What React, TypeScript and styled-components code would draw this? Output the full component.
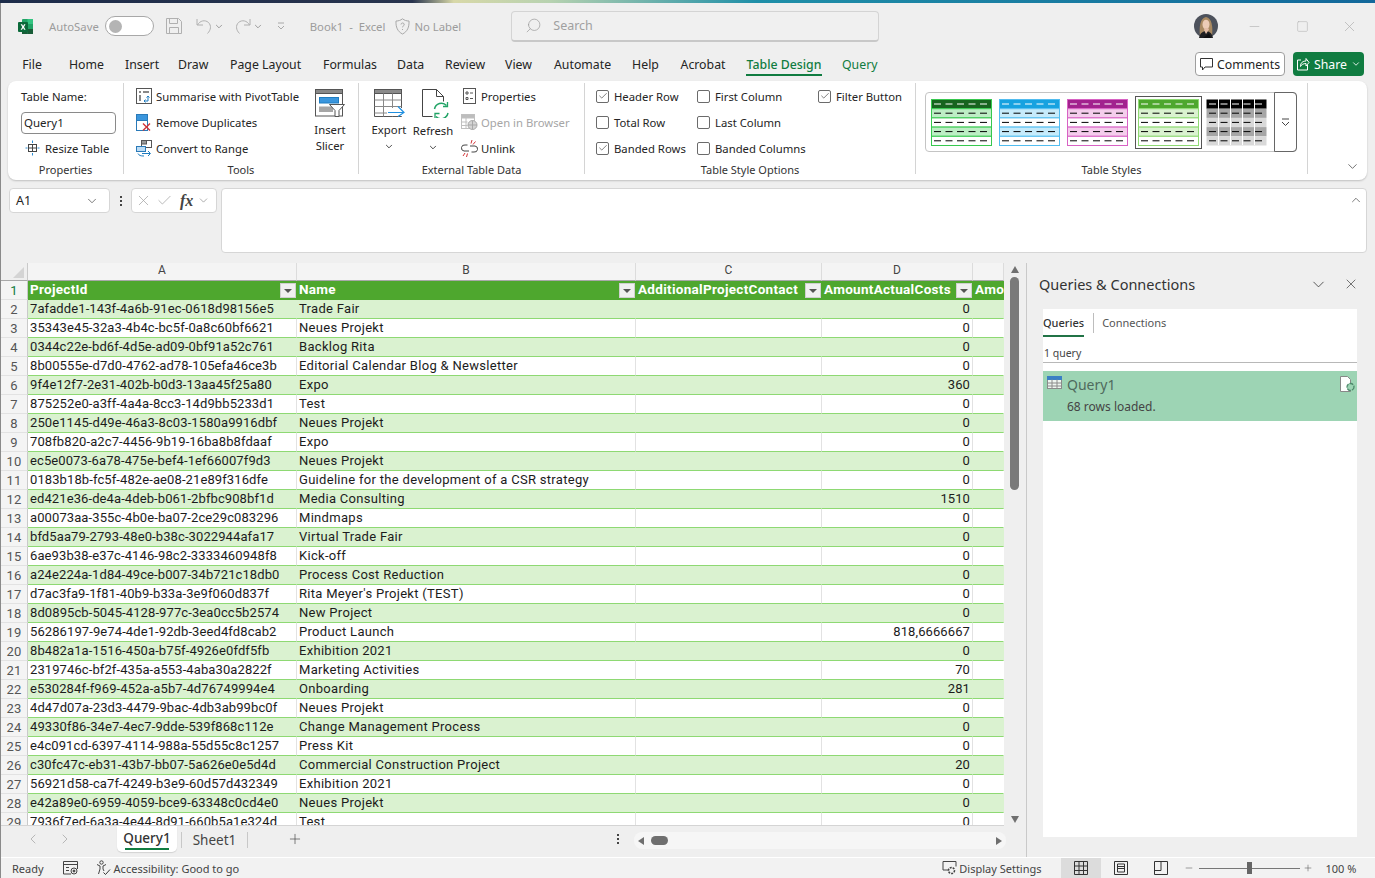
import React from "react";
import styled, { createGlobalStyle } from "styled-components";
import { ChevronDown, ChevronLeft, ChevronRight, Minus, Plus, Search, Square, X, Check } from "lucide-react";

const Global = createGlobalStyle`
  html, body { margin: 0; padding: 0; background: #efefef; }
  * { box-sizing: border-box; }
  body { font-family: "Noto Sans", "Liberation Sans", sans-serif; color: #242424; }
`;

const rows: [string, string, string][] = [
  ["7afadde1-143f-4a6b-91ec-0618d98156e5", "Trade Fair", "0"],
  ["35343e45-32a3-4b4c-bc5f-0a8c60bf6621", "Neues Projekt", "0"],
  ["0344c22e-bd6f-4d5e-ad09-0bf91a52c761", "Backlog Rita", "0"],
  ["8b00555e-d7d0-4762-ad78-105efa46ce3b", "Editorial Calendar Blog & Newsletter", "0"],
  ["9f4e12f7-2e31-402b-b0d3-13aa45f25a80", "Expo", "360"],
  ["875252e0-a3ff-4a4a-8cc3-14d9bb5233d1", "Test", "0"],
  ["250e1145-d49e-46a3-8c03-1580a9916dbf", "Neues Projekt", "0"],
  ["708fb820-a2c7-4456-9b19-16ba8b8fdaaf", "Expo", "0"],
  ["ec5e0073-6a78-475e-bef4-1ef66007f9d3", "Neues Projekt", "0"],
  ["0183b18b-fc5f-482e-ae08-21e89f316dfe", "Guideline for the development of a CSR strategy", "0"],
  ["ed421e36-de4a-4deb-b061-2bfbc908bf1d", "Media Consulting", "1510"],
  ["a00073aa-355c-4b0e-ba07-2ce29c083296", "Mindmaps", "0"],
  ["bfd5aa79-2793-48e0-b38c-3022944afa17", "Virtual Trade Fair", "0"],
  ["6ae93b38-e37c-4146-98c2-3333460948f8", "Kick-off", "0"],
  ["a24e224a-1d84-49ce-b007-34b721c18db0", "Process Cost Reduction", "0"],
  ["d7ac3fa9-1f81-40b9-b33a-3e9f060d837f", "Rita Meyer's Projekt (TEST)", "0"],
  ["8d0895cb-5045-4128-977c-3ea0cc5b2574", "New Project", "0"],
  ["56286197-9e74-4de1-92db-3eed4fd8cab2", "Product Launch", "818,6666667"],
  ["8b482a1a-1516-450a-b75f-4926e0fdf5fb", "Exhibition 2021", "0"],
  ["2319746c-bf2f-435a-a553-4aba30a2822f", "Marketing Activities", "70"],
  ["e530284f-f969-452a-a5b7-4d76749994e4", "Onboarding", "281"],
  ["4d47d07a-23d3-4479-9bac-4db3ab99bc0f", "Neues Projekt", "0"],
  ["49330f86-34e7-4ec7-9dde-539f868c112e", "Change Management Process", "0"],
  ["e4c091cd-6397-4114-988a-55d55c8c1257", "Press Kit", "0"],
  ["c30fc47c-eb31-43b7-bb07-5a626e0e5d4d", "Commercial Construction Project", "20"],
  ["56921d58-ca7f-4249-b3e9-60d57d432349", "Exhibition 2021", "0"],
  ["e42a89e0-6959-4059-bce9-63348c0cd4e0", "Neues Projekt", "0"],
  ["7936f7ed-6a3a-4e44-8d91-660b5a1e324d", "Test", "0"],
];

const Page = styled.div`
  width: 1375px; height: 878px; overflow: hidden; display: flex; flex-direction: column; background: #efefef;
`;
const Wallpaper = styled.div`
  height: 3px; flex: none;
  background: linear-gradient(90deg, #1d2c4a 0, #28344e 30%, #d8d8a8 33%, #b7d2b0 40%, #1f8fa8 55%, #12689b 100%);
`;
const Frame = styled.div`
  flex: 1; min-height: 0; display: flex; flex-direction: column; border-left: 1px solid #8a8a8a;
`;

/* Title bar */
const TitleBar = styled.div`
  height: 46px; flex: none; display: flex; align-items: center; padding-left: 16px; color: #9c9c9c; font-size: 11.3px;
`;
const At = styled.span<{ $ml?: number }>`
  display: inline-flex; align-items: center; margin-left: ${p => p.$ml ?? 0}px; flex: none;
`;
const Toggle = styled.span`
  width: 49px; height: 20px; border: 1px solid #a8a8a8; border-radius: 10px; background: #fff; margin-left: 6px;
  display: flex; align-items: center; padding-left: 3px; flex: none;
  &::before { content: ""; width: 13px; height: 13px; border-radius: 50%; background: #b4b4b4; }
`;
const SearchBox = styled.div`
  width: 368px; height: 31px; margin-left: 50px; background: #f0f0f0; border: 1px solid #d4d4d4; border-bottom: 2px solid #c8c8c8;
  border-radius: 4px; display: flex; align-items: center; padding-left: 13px; gap: 11px; font-size: 12.5px; color: #a0a0a0; flex: none;
`;
const WinButtons = styled.div`
  display: flex; align-items: center; margin-left: 29px; gap: 32px; color: #b0b0b0;
`;

/* Tabs */
const TabBar = styled.div`
  height: 29px; flex: none; padding: 3px 11px 0 21px; display: flex; align-items: flex-start; font-size: 12.3px;
`;
const Tab = styled.div<{ $active?: boolean; $ctx?: boolean; $w?: number }>`
  height: 24px; line-height: 25px; width: ${p => p.$w}px; white-space: nowrap; text-align: center;
  color: ${p => (p.$active || p.$ctx ? "#107c41" : "#242424")};
  border-bottom: 2px solid ${p => (p.$active ? "#107c41" : "transparent")};
  font-weight: ${p => (p.$active ? 500 : 400)};
`;
const TabGap = styled.div<{ $w: number }>`
  width: ${p => p.$w}px; flex: none;
`;
const CommentsBtn = styled.div`
  margin-left: auto; width: 90px; height: 24px; border: 1px solid #9e9e9e; border-radius: 4px; background: #fff;
  display: flex; align-items: center; justify-content: center; gap: 4px; font-size: 12.3px;
`;
const ShareBtn = styled.div`
  margin-left: 8px; width: 71px; height: 24px; border-radius: 4px; background: #107c41; color: #fff;
  display: flex; align-items: center; justify-content: center; gap: 4px; font-size: 12.3px;
`;

/* Ribbon */
const Ribbon = styled.div`
  height: 99px; flex: none; margin: 3px 8px 0 7px; padding-top: 2px; background: #fff; border-radius: 8px;
  box-shadow: 0 1px 2px rgba(0,0,0,.2); display: flex; font-size: 11.3px;
`;
const Group = styled.div<{ $w: number; $last?: boolean }>`
  width: ${p => p.$w}px; height: 91px; flex: none; display: flex; flex-direction: column;
  border-right: ${p => (p.$last ? "none" : "1px solid #d4d4d4")};
`;
const GroupBody = styled.div<{ $pl?: number }>`
  height: 79px; flex: none; display: flex; padding-left: ${p => p.$pl ?? 0}px;
`;
const GroupLabel = styled.div`
  height: 16px; line-height: 16px; flex: none; text-align: center; font-size: 11px; color: #333;
`;
const Stack = styled.div<{ $w?: number }>`
  display: flex; flex-direction: column; ${p => (p.$w ? `width: ${p.$w}px; flex: none;` : "")}
`;
const Row = styled.div<{ $off?: boolean; $pl?: number; $gap?: number }>`
  height: 26px; display: flex; align-items: center; gap: ${p => p.$gap ?? 4}px; white-space: nowrap; padding-left: ${p => p.$pl ?? 0}px;
  color: ${p => (p.$off ? "#a6a6a6" : "#242424")};
`;
const NameInput = styled.div`
  width: 95px; height: 22px; border: 1px solid #8a8a8a; border-radius: 4px; font-size: 11.5px; padding-left: 2px; line-height: 20px; margin-top: 3px;
`;
const ResizeRow = styled(Row)`
  margin-top: 1px;
`;
const LargeBtn = styled.div<{ $w: number; $ml?: number }>`
  width: ${p => p.$w}px; flex: none; margin-left: ${p => p.$ml ?? 0}px; display: flex; flex-direction: column; align-items: center;
  padding-top: 6px; line-height: 16px; text-align: center; color: #242424;
`;
const LargeText = styled.div`
  margin-top: 5px; white-space: nowrap;
`;
const LargeChevron = styled.div`
  margin-top: 6px;
`;
const Box = styled.span`
  width: 13px; height: 13px; border: 1px solid #6b6b6b; border-radius: 2px; display: inline-flex; align-items: center; justify-content: center;
  margin-right: 1px; flex: none; color: #333; background: #fff;
`;
const Gallery = styled.div`
  margin: 9px 0 0 9px; width: 372px; height: 60px; border: 1px solid #c4c4c4; border-radius: 4px; display: flex; align-items: center; padding-left: 5px;
`;
const ThumbSlot = styled.div<{ $sel?: boolean; $ml?: number }>`
  width: ${p => (p.$sel ? 67 : 68)}px; height: 53px; display: flex; align-items: center; flex: none;
  margin-left: ${p => p.$ml ?? 0}px;
  padding-left: ${p => (p.$sel ? 2 : 0)}px;
  border: ${p => (p.$sel ? "1px solid #555" : "none")};
`;
const GalleryMore = styled.div`
  margin-left: auto; width: 24px; height: 60px; margin-right: -1px; border: 1px solid #666; border-radius: 0 4px 4px 0; display: flex; align-items: center; justify-content: center;
`;
const RibbonEnd = styled.div`
  flex: 1; display: flex; align-items: flex-end; justify-content: flex-end; padding: 0 7px 6px 0; color: #444;
`;

/* Formula bar */
const FormulaBar = styled.div`
  height: 65px; flex: none; margin-top: 8px; padding-left: 8px; padding-right: 8px; display: flex; align-items: flex-start;
`;
const NameBox = styled.div`
  width: 101px; height: 25px; background: #fff; border: 1px solid #d6d6d6; border-radius: 4px; display: flex; align-items: center;
  justify-content: space-between; padding: 0 10px 0 6px; font-size: 12.5px;
`;
const Dots = styled.div`
  width: 21px; height: 25px; display: flex; flex-direction: column; align-items: center; justify-content: center; gap: 2px;
  & > i { width: 2px; height: 2px; background: #444; display: block; }
`;
const FxBox = styled.div`
  width: 86px; height: 25px; background: #fff; border: 1px solid #d6d6d6; border-radius: 4px; display: flex; align-items: center;
  padding-left: 3px; gap: 4px; color: #a8a8a8; flex: none;
`;
const Fx = styled.span`
  font-family: "Liberation Serif", serif; font-style: italic; font-weight: 700; font-size: 16px; color: #444; margin-left: 3px;
`;
const FormulaInput = styled.div`
  flex: 1; height: 65px; margin-left: 4px; background: #fff; border: 1px solid #d6d6d6; border-radius: 4px; display: flex; justify-content: flex-end; padding: 4px 3px 0 0; color: #444;
`;

/* Workspace */
const Workspace = styled.div`
  height: 594px; flex: none; margin-top: 10px; display: flex;
`;
const SheetColumn = styled.div`
  width: 1025px; flex: none; display: flex; flex-direction: column;
`;
const SheetMain = styled.div`
  height: 563px; flex: none; display: flex;
`;
const Sheet = styled.div`
  width: 1003px; height: 563px; flex: none; overflow: hidden; background: #fff;
  display: grid; grid-template-columns: 27px 269px 339px 186px 151px 31px; grid-auto-rows: 19px; grid-template-rows: 18px;
  font-family: Roboto, "Liberation Sans", sans-serif; font-size: 13px; letter-spacing: .1px; border-bottom: 1px solid #d4d4d4;
`;
const Corner = styled.div`
  background: #efefef; border-right: 1px solid #c9c9c9; border-bottom: 1px solid #a8a8a8; display: flex; align-items: flex-end; justify-content: flex-end; padding: 0 3px 2px 0;
  &::after { content: ""; border-style: solid; border-width: 0 0 11px 11px; border-color: transparent transparent #d4d4d4 transparent; }
`;
const ColHead = styled.div`
  background: #f4f4f4; border-right: 1px solid #dcdcdc; border-bottom: 1px solid #a8a8a8; text-align: center; line-height: 15px; font-size: 12px; color: #444;
`;
const RowHead = styled.div<{ $sel?: boolean }>`
  background: #f4f4f4; border-right: 1px solid #c9c9c9; border-bottom: 1px solid #e2e2e2; text-align: center; line-height: 19px; font-size: 13px; color: ${p => (p.$sel ? "#107c41" : "#555")};
`;
const HeaderCell = styled.div`
  background: #4ea72e; color: #fff; font-weight: 700; display: flex; align-items: center; justify-content: space-between; padding: 0 1px 0 2px; white-space: nowrap; overflow: hidden; font-size: 13.5px; letter-spacing: .3px;
  line-height: 17px;
`;
const HeaderText = styled.span`
  margin-bottom: 2px;
`;
const FilterBtn = styled.span`
  width: 16px; height: 15px; background: #f0f0f0; border: 1px solid #d0d0d0; display: flex; align-items: center; justify-content: center; flex: none;
  &::after { content: ""; border-style: solid; border-width: 4px 4px 0 4px; border-color: #555 transparent transparent transparent; }
`;
const Cell = styled.div<{ $band: boolean; $num?: boolean; $noLine?: boolean }>`
  background: ${p => (p.$band ? "#daf2d0" : "#fff")};
  border-bottom: 1px solid #8ed973;
  border-right: 1px solid ${p => (p.$band || p.$noLine ? "transparent" : "#e2e2e2")};
  padding: 0 ${p => (p.$num ? "2px" : "0")} 0 ${p => (p.$num ? "0" : "2px")};
  text-align: ${p => (p.$num ? "right" : "left")};
  line-height: 18px; white-space: nowrap; overflow: hidden; color: #1c1c1c;
`;
const NameCell = styled(Cell)`
  letter-spacing: .3px;
`;
const VScroll = styled.div`
  width: 22px; flex: none; display: flex; flex-direction: column; align-items: center; padding: 3px 1px 0 0; color: #666;
`;
const VThumb = styled.div`
  width: 9px; height: 213px; border-radius: 5px; background: #7a7a7a; margin-top: 4px;
`;
const VSpacer = styled.div`
  flex: 1;
`;
const TriUp = styled.div`
  border-style: solid; border-width: 0 4.5px 7px 4.5px; border-color: transparent transparent #707070 transparent; flex: none;
`;
const TriDown = styled.div`
  border-style: solid; border-width: 7px 4.5px 0 4.5px; border-color: #707070 transparent transparent transparent; flex: none; margin-bottom: 3px;
`;
const SheetTabs = styled.div`
  height: 31px; flex: none; display: flex; align-items: flex-start; font-size: 13.5px; color: #444;
`;
const NavArrows = styled.div`
  width: 116px; height: 26px; flex: none; display: flex; align-items: center; padding-left: 24px; gap: 16px; color: #a8a8a8;
`;
const ActiveTab = styled.div`
  width: 60px; height: 26px; background: #fff; border-radius: 0 0 5px 5px; text-align: center; flex: none; font-weight: 500; color: #333; padding-top: 2px; line-height: 20px;
  box-shadow: 0 1px 1px rgba(0,0,0,.12);
  &::after { content: ""; display: block; width: 44px; height: 2px; background: #107c41; margin: 0 auto; }
`;
const PlainTab = styled.div`
  width: 67px; height: 16px; margin: 6px 0 0 4px; border-left: 1px solid #c8c8c8; border-right: 1px solid #c8c8c8; text-align: center; line-height: 16px; flex: none;
`;
const AddTab = styled.div`
  width: 40px; height: 26px; margin-left: 37px; display: flex; align-items: center; color: #444; flex: none; padding-left: 2px;
`;
const TabDots = styled(Dots)`
  width: 16px; height: 26px; margin-left: 285px; flex: none;
`;
const HScroll = styled.div`
  width: 372px; height: 17px; margin: 6px 0 0 8px; background: #f6f6f6; border-radius: 8px; display: flex; align-items: center; padding: 0 4px; flex: none;
`;
const HThumb = styled.div`
  width: 17px; height: 9px; border-radius: 5px; background: #6f6f6f; margin-left: 7px;
`;
const TriLeft = styled.div`
  border-style: solid; border-width: 4.5px 6px 4.5px 0; border-color: transparent #6f6f6f transparent transparent;
`;
const TriRight = styled.div`
  border-style: solid; border-width: 4.5px 0 4.5px 6px; border-color: transparent transparent transparent #6f6f6f; margin-left: auto;
`;

/* Queries panel */
const Panel = styled.div`
  width: 349px; flex: none; border-left: 1px solid #c9c9c9; display: flex; flex-direction: column; padding: 0 18px 20px 16px;
`;
const PanelHead = styled.div`
  height: 46px; flex: none; display: flex; align-items: center; font-size: 14.5px; color: #333; margin-left: -4px; margin-right: -2px; padding-bottom: 4px;
`;
const PanelTitle = styled.div`
  flex: 1; white-space: nowrap;
`;
const PanelCard = styled.div`
  flex: 1; background: #fff; font-size: 11px; color: #444;
`;
const PanelTabs = styled.div`
  display: flex; height: 28px; align-items: flex-start; padding-top: 4px;
`;
const PanelTab = styled.div<{ $active?: boolean }>`
  height: 24px; line-height: 20px; margin-left: ${p => (p.$active ? 0 : 8)}px;
  color: ${p => (p.$active ? "#333" : "#555")}; font-weight: ${p => (p.$active ? 500 : 400)};
  border-bottom: 2px solid ${p => (p.$active ? "#217346" : "transparent")};
  white-space: nowrap;
`;
const PanelTabSep = styled.div`
  width: 1px; height: 20px; background: #bdbdbd; margin-left: 9px;
`;
const QueryCount = styled.div`
  height: 26px; border-bottom: 1px solid #b8b8b8; line-height: 32px; font-size: 10.5px; padding-left: 1px;
`;
const QueryItem = styled.div`
  margin-top: 8px; height: 50px; background: #9dd4b4; display: flex; color: #555; padding: 5px 2px 0 4px;
`;
const QueryBody = styled.div`
  flex: 1; padding-left: 5px;
`;
const QueryName = styled.div`
  font-size: 14px; line-height: 18px; color: #4f6b5d;
`;
const QueryInfo = styled.div`
  font-size: 12px; line-height: 16px; margin-top: 5px; color: #454545;
`;

/* Status */
const Status = styled.div`
  flex: 1; min-height: 0; border-top: 1px solid #fff; display: flex; align-items: center; font-size: 11px; color: #444; background: #f2f2f2;
`;
const ViewBtn = styled.div<{ $active?: boolean }>`
  width: 40px; height: 20px; display: flex; align-items: center; justify-content: center; background: ${p => (p.$active ? "#dcdcdc" : "transparent")}; flex: none;
`;
const Slider = styled.div`
  width: 101px; height: 1px; background: #777; margin: 0 3px 0 5px; display: flex; align-items: center; justify-content: center; flex: none;
  &::after { content: ""; width: 5px; height: 12px; background: #666; flex: none; }
`;

/* Icons */
const Svg = styled.svg`
  display: block; flex: none;
`;
const ExcelLogo = () => (
  <Svg width="17" height="17" viewBox="0 0 17 17">
    <rect x="5" y="1" width="11" height="15" rx="1" fill="#21a366" />
    <rect x="10.5" y="1" width="5.5" height="5" fill="#33c481" />
    <rect x="5" y="6" width="5.5" height="5" fill="#107c41" />
    <rect x="10.5" y="11" width="5.5" height="5" fill="#185c37" />
    <rect x="5" y="11" width="5.5" height="5" fill="#185c37" />
    <rect x="1" y="4" width="10" height="10" rx="1" fill="#0b6a3a" />
    <path d="M3.6 6.2h1.5l1 1.8 1-1.8h1.4L7 9l1.6 2.8H7.1L6.1 10 5 11.8H3.6L5.3 9z" fill="#fff" />
  </Svg>
);
const SaveIcon = () => (
  <Svg width="16" height="16" viewBox="0 0 16 16" fill="none" stroke="#b0b0b0">
    <path d="M.5 .5h12l3 3v12H.5z M3.500 .5v5h8v-5 M3.500 15.500v-6h9v6" />
  </Svg>
);
const UndoIcon = ({ flip }: { flip?: boolean }) => (
  <Svg width="16" height="17" viewBox="0 0 16 17" fill="none" stroke="#b0b0b0" style={flip ? { transform: "scaleX(-1)" } : undefined}>
    <path d="M1 1v6h6 M1.500 7C4 2.500 9 1.500 12.500 4.500c3 3 2.500 7.500-1 11" />
  </Svg>
);
const TinyChevron = ({ c = "#9a9a9a", s = 8 }: { c?: string; s?: number }) => (
  <Svg width={s} height={s * 0.6} viewBox="0 0 8 5" fill="none" stroke={c}>
    <path d="M1 1l3 3 3-3" />
  </Svg>
);
const QatMore = () => (
  <Svg width="8" height="8" viewBox="0 0 8 8" fill="none" stroke="#a8a8a8">
    <path d="M1 1h6 M1 4l3 3 3-3" />
  </Svg>
);
const ShieldIcon = () => (
  <Svg width="15" height="17" viewBox="0 0 15 17" fill="none" stroke="#a8a8a8">
    <path d="M7.500 .8C9.500 2.400 11.500 3 14 3c.3 6-1.500 10.500-6.500 13C2.500 13.500.7 9 1 3c2.500 0 4.500-.6 6.500-2.200z" />
    <path d="M6 6.500a1.600 1.600 0 1 1 2.300 1.500c-.5.3-.8.6-.8 1.300" /><path d="M7.500 11v1" />
  </Svg>
);
const Avatar = () => (
  <Svg width="24" height="24" viewBox="0 0 24 24">
    <circle cx="12" cy="12" r="12" fill="#4d525c" />
    <path d="M6 22c-1-9 0-18 6-19 6 1 7 10 6 19z" fill="#a98a62" />
    <ellipse cx="12" cy="10.500" rx="3.500" ry="4.800" fill="#ecccb6" />
    <path d="M5 24c1-5 4-7 7-7s6 2 7 7z" fill="#1f1f22" />
    <path d="M10 16l2 4 3-4.500-1-1.500h-3z" fill="#e4bda6" />
    <path d="M9 24l6-4.500 2 4.500z" fill="#101012" />
  </Svg>
);
const CommentIcon = () => (
  <Svg width="13" height="13" viewBox="0 0 13 13" fill="none" stroke="#333">
    <path d="M.5 .5h12v8.500H5L2.500 12V9H.5z" />
  </Svg>
);
const ShareIcon = () => (
  <Svg width="14" height="14" viewBox="0 0 14 14" fill="none" stroke="#fff">
    <path d="M5 3H1.500v10h10V8 M4.500 9.500c0-4 2.500-5.500 5.500-5.500V1.500L13 5.500l-3 3.500V6.500C7.500 6.500 5.500 7.500 4.500 9.500z" />
  </Svg>
);
const ResizeIcon = () => (
  <Svg width="15" height="16" viewBox="0 0 15 16" fill="none" stroke="#444">
    <rect x="3.500" y="4.500" width="8" height="7" />
    <path d="M3.500 8h8 M7.500 4.500v7" />
    <path d="M7.500 .5v2.500 M7.500 13v2.500 M.5 8h2 M12.500 8h2" stroke="#2a8dd4" />
  </Svg>
);
const PivotIcon = () => (
  <Svg width="16" height="16" viewBox="0 0 16 16" fill="none">
    <rect x=".5" y=".5" width="15" height="15" stroke="#555" />
    <path d="M3 3h2v2H3z M7 3h6v2H7z M3 7h2v6H3z" fill="#888" />
    <path d="M8 13h4V8 M10.500 9.500L12 8l1.500 1.500 M9.500 11.500L8 13l1.500 1.500" stroke="#1f7cc0" />
  </Svg>
);
const DupIcon = () => (
  <Svg width="16" height="17" viewBox="0 0 16 17" fill="none">
    <rect x=".5" y=".5" width="11" height="6" fill="#3a96dd" stroke="#2a7ab8" />
    <rect x=".5" y="6.500" width="11" height="10" fill="#fff" stroke="#2a7ab8" />
    <path d="M7 9.500l7 7 M14 9.500l-7 7" stroke="#d13438" strokeWidth="1.400" />
  </Svg>
);
const ConvertIcon = () => (
  <Svg width="17" height="17" viewBox="0 0 17 17" fill="none">
    <rect x="5.500" y=".5" width="10" height="7" stroke="#555" fill="#fff" />
    <rect x="5.500" y=".5" width="5" height="3.500" fill="#999" stroke="#555" />
    <rect x=".5" y="6.500" width="9" height="5" fill="#bcdcf5" stroke="#2a7ab8" />
    <path d="M2 13.500c1 2 2.500 2.500 6 2.500 M12 11l2.500 2.500L12 16 M14 13.500H6" stroke="#1f7cc0" />
  </Svg>
);
const SlicerIcon = () => (
  <Svg width="30" height="28" viewBox="0 0 30 28" fill="none">
    <rect x=".5" y=".5" width="27" height="26.500" fill="#fff" stroke="#555" />
    <rect x=".5" y=".5" width="27" height="4" fill="#888" stroke="#555" />
    <rect x="4.500" y="8.500" width="19" height="5.500" fill="#3a96dd" stroke="#1f7cc0" />
    <rect x="4.500" y="18" width="13" height="4.500" fill="#a6a6a6" stroke="#a6a6a6" />
    <path d="M14.500 15.500h15l-5.500 6v6h-4v-6z" fill="#fff" stroke="#555" />
  </Svg>
);
const ExportIcon = () => (
  <Svg width="31" height="28" viewBox="0 0 31 28" fill="none">
    <path d="M.5 .5h27v27H.5z" fill="#fff" stroke="#555" />
    <rect x=".5" y=".5" width="27" height="4" fill="#8a8a8a" stroke="#555" />
    <path d="M.5 11h27 M.5 17.500h27 M.5 24h27 M9.500 4.500v23 M18.500 4.500v23" stroke="#888" />
    <rect x="13" y="19" width="17" height="8" fill="#fff" />
    <path d="M14 23.500h15 M24 17.500l6 6-6 4" stroke="#1f8fe0" strokeWidth="1.200" fill="none" />
  </Svg>
);
const RefreshIcon = () => (
  <Svg width="34" height="29" viewBox="-6 0 34 29" fill="none">
    <path d="M.5 .5h14l7 7v5 M14.500 .5v7h7 M.5 .5v27h10" stroke="#444" />
    <path d="M12.500 20a7 7 0 0 1 12-3.500 M26 24a7 7 0 0 1-12 3.500" stroke="#21a366" strokeWidth="1.500" />
    <path d="M25.500 13v4.500H21 M13 29v-4.500h4.500" stroke="#21a366" strokeWidth="1.300" />
  </Svg>
);
const PropsIcon = () => (
  <Svg width="13" height="16" viewBox="0 0 13 16" fill="none" stroke="#555">
    <rect x=".5" y=".5" width="12" height="15" />
    <path d="M3 4h2v2H3z M3 9.500h2v2H3z M7 5h3 M7 10.500h3" />
  </Svg>
);
const BrowserIcon = () => (
  <Svg width="17" height="16" viewBox="0 0 17 16" fill="none" stroke="#c0c0c0">
    <rect x=".5" y=".5" width="13" height="14" fill="#fff" />
    <rect x=".5" y=".5" width="13" height="3.500" fill="#bdbdbd" />
    <path d="M.5 8h6 M.5 11.500h6 M5 4v10" />
    <circle cx="11.500" cy="11" r="4.500" fill="#d4d4d4" stroke="#a8a8a8" />
    <path d="M7 11h9 M11.500 6.500v9" stroke="#a8a8a8" />
  </Svg>
);
const UnlinkIcon = () => (
  <Svg width="17" height="17" viewBox="0 0 17 17" fill="none">
    <path d="M6.500 5H4a3 3 0 0 0-1 6h5 M10.500 12H13a3 3 0 0 0 1-6H9" stroke="#444" />
    <path d="M11 0l-1 3.500 M14.500 1.500l-2.500 3 M2 16l2-3 M5.500 17l1-3.500" stroke="#d13438" />
  </Svg>
);
type ThumbProps = { head: string; band: string; line: string; mono?: boolean };
const StyleThumb = ({ head, band, line, mono }: ThumbProps) => {
  const ys = [0, 9.200, 18.400, 27.600, 36.800];
  return (
    <Svg width="61" height="47" viewBox="0 0 61 47" fill="none">
      {ys.map((y, i) => (
        <rect key={i} x=".5" y={y + 0.5} width="60" height="9.200"
          fill={i === 0 ? head : mono ? (i % 2 ? "#a6a6a6" : "#d9d9d9") : i % 2 ? band : "#fff"}
          stroke={mono ? "none" : line} />
      ))}
      {ys.map((y, i) => (
        <path key={i} d={`M3 ${y + 5}h56`} stroke={i === 0 ? "#fff" : "#000"} strokeDasharray="7 4.500" />
      ))}
      {mono && <path d="M12.500 0v46 M24.500 0v46 M36.500 0v46 M48.500 0v46" stroke="#fff" />}
    </Svg>
  );
};
const MoreIcon = () => (
  <Svg width="9" height="9" viewBox="0 0 9 9" fill="none" stroke="#444">
    <path d="M1 1h7 M1 4l3.500 3.500L8 4" />
  </Svg>
);
const TableMini = () => (
  <Svg width="15" height="13" viewBox="0 0 15 13" fill="none">
    <rect x=".5" y=".5" width="14" height="12" fill="#eef5f0" stroke="#8a8a8a" />
    <rect x=".5" y=".5" width="14" height="3" fill="#3a7fc4" stroke="#3a7fc4" />
    <path d="M.5 7h14 M.5 10h14 M5 3.500v9 M10 3.500v9" stroke="#8a8a8a" />
  </Svg>
);
const QueryFile = () => (
  <Svg width="15" height="16" viewBox="0 0 15 16" fill="none">
    <path d="M.5 .5h7l3 3v12h-10z" fill="#fff" stroke="#888" />
    <circle cx="10.500" cy="11" r="3.500" fill="#9dd4b4" stroke="#4f8a6c" strokeWidth="1.300" strokeDasharray="4 1" />
  </Svg>
);
const MacroIcon = () => (
  <Svg width="15" height="14" viewBox="0 0 15 14" fill="none" stroke="#444">
    <path d="M8 13H.5V.5h14V8" /><path d="M.5 3.500h14 M3 6.500h3 M3 9.500h3" />
    <circle cx="11" cy="10" r="3" /><circle cx="11" cy="10" r="1" fill="#444" />
  </Svg>
);
const AccessIcon = () => (
  <Svg width="15" height="16" viewBox="0 0 15 16" fill="none" stroke="#444">
    <circle cx="5.500" cy="2.500" r="1.700" /><path d="M1 4.500l3 1.500v3L2.500 14 M10 4.500L7 6v3l1 2" />
    <path d="M7.500 12.500l2 2 4.500-5" stroke="#333" />
  </Svg>
);
const DisplayIcon = () => (
  <Svg width="15" height="14" viewBox="0 0 15 14" fill="none" stroke="#444">
    <path d="M1 9V.5h13v5 M1 9h5" /><circle cx="9.500" cy="9.500" r="3" strokeWidth="1.500" strokeDasharray="2 1" />
  </Svg>
);
const NormalView = () => (
  <Svg width="14" height="14" viewBox="0 0 14 14" fill="none" stroke="#333">
    <path d="M.5 .5h13v13H.5z M.5 5h13 M.5 9.500h13 M5 .5v13 M9.500 .5v13" />
  </Svg>
);
const PageView = () => (
  <Svg width="14" height="14" viewBox="0 0 14 14" fill="none" stroke="#333">
    <path d="M.5 .5h13v13H.5z M3.500 3h7v8h-7z M3.500 5.500h7 M3.500 7.500h7" />
  </Svg>
);
const BreakView = () => (
  <Svg width="14" height="14" viewBox="0 0 14 14" fill="none" stroke="#333">
    <path d="M.5 .5h13v13H.5z M.5 9.500h6.500V.5" />
  </Svg>
);

const CheckRow = ({ on, label }: { on?: boolean; label: string }) => (
  <Row>
    <Box>{on && <Check size={10} strokeWidth={1.500} />}</Box>
    {label}
  </Row>
);

const tabs: [string, number, number][] = [
  ["File", 20, 27], ["Home", 35, 21], ["Insert", 32, 21], ["Draw", 30, 22], ["Page Layout", 71, 22], ["Formulas", 53, 21],
  ["Data", 27, 21], ["Review", 40, 20], ["View", 27, 22], ["Automate", 56, 22], ["Help", 27, 21], ["Acrobat", 46, 20],
];
const colW = ["A", "B", "C", "D", ""];

export default function App() {
  return (
    <Page>
      <Global />
      <Wallpaper />
      <Frame>
        <TitleBar>
          <ExcelLogo />
          <At $ml={15}>AutoSave</At>
          <Toggle />
          <At $ml={12}><SaveIcon /></At>
          <At $ml={14}><UndoIcon /></At>
          <At $ml={3}><TinyChevron /></At>
          <At $ml={12}><UndoIcon flip /></At>
          <At $ml={3}><TinyChevron /></At>
          <At $ml={15}><QatMore /></At>
          <At $ml={25}>Book1&nbsp; -&nbsp; Excel</At>
          <At $ml={10}><ShieldIcon /></At>
          <At $ml={4}>No Label</At>
          <SearchBox>
            <Search size={17} strokeWidth={1} color="#9a9a9a" style={{ transform: "scaleX(-1)" }} />
            Search
          </SearchBox>
          <At $ml={315}><Avatar /></At>
          <WinButtons>
            <Minus size={15} strokeWidth={1} />
            <Square size={13} strokeWidth={1} style={{ marginLeft: 2 }} />
            <X size={17} strokeWidth={1} />
          </WinButtons>
        </TitleBar>
        <TabBar>
          {tabs.map(([t, w, g]) => (
            <React.Fragment key={t}>
              <Tab $w={w}>{t}</Tab>
              <TabGap $w={g} />
            </React.Fragment>
          ))}
          <Tab $w={76} $active>Table Design</Tab>
          <TabGap $w={20} />
          <Tab $w={35} $ctx>Query</Tab>
          <CommentsBtn><CommentIcon />Comments</CommentsBtn>
          <ShareBtn><ShareIcon />Share<ChevronDown size={10} strokeWidth={2} /></ShareBtn>
        </TabBar>
        <Ribbon>
          <Group $w={116}>
            <GroupBody $pl={13}>
              <Stack>
                <Row>Table Name:</Row>
                <NameInput>Query1</NameInput>
                <ResizeRow $pl={4} $gap={5}><ResizeIcon />Resize Table</ResizeRow>
              </Stack>
            </GroupBody>
            <GroupLabel>Properties</GroupLabel>
          </Group>
          <Group $w={235}>
            <GroupBody $pl={12}>
              <Stack $w={176}>
                <Row><PivotIcon />Summarise with PivotTable</Row>
                <Row><DupIcon />Remove Duplicates</Row>
                <Row $gap={3}><ConvertIcon />Convert to Range</Row>
              </Stack>
              <LargeBtn $w={38} $ml={-1}>
                <SlicerIcon />
                <LargeText>Insert<br />Slicer</LargeText>
              </LargeBtn>
            </GroupBody>
            <GroupLabel>Tools</GroupLabel>
          </Group>
          <Group $w={226}>
            <GroupBody $pl={12}>
              <LargeBtn $w={36}>
                <ExportIcon />
                <LargeText>Export</LargeText>
                <LargeChevron><TinyChevron c="#444" /></LargeChevron>
              </LargeBtn>
              <LargeBtn $w={40} $ml={6}>
                <RefreshIcon />
                <LargeText>Refresh</LargeText>
                <LargeChevron><TinyChevron c="#444" /></LargeChevron>
              </LargeBtn>
              <Stack>
                <Row $pl={10} $gap={5}><PropsIcon />Properties</Row>
                <Row $off $pl={8} $gap={3}><BrowserIcon />Open in Browser</Row>
                <Row $pl={8} $gap={3}><UnlinkIcon />Unlink</Row>
              </Stack>
            </GroupBody>
            <GroupLabel>External Table Data</GroupLabel>
          </Group>
          <Group $w={331}>
            <GroupBody $pl={11}>
              <Stack $w={101}>
                <CheckRow on label="Header Row" />
                <CheckRow label="Total Row" />
                <CheckRow on label="Banded Rows" />
              </Stack>
              <Stack $w={121}>
                <CheckRow label="First Column" />
                <CheckRow label="Last Column" />
                <CheckRow label="Banded Columns" />
              </Stack>
              <Stack>
                <CheckRow on label="Filter Button" />
              </Stack>
            </GroupBody>
            <GroupLabel>Table Style Options</GroupLabel>
          </Group>
          <Group $w={392} $last={false}>
            <GroupBody>
              <Gallery>
                <ThumbSlot><StyleThumb head="#17641f" band="#bdeec5" line="#37c84f" /></ThumbSlot>
                <ThumbSlot><StyleThumb head="#16a2e0" band="#c6ebfb" line="#52bdf0" /></ThumbSlot>
                <ThumbSlot><StyleThumb head="#a2228e" band="#f4cdec" line="#d862c4" /></ThumbSlot>
                <ThumbSlot $sel><StyleThumb head="#4ea72e" band="#daf2d0" line="#8ed973" /></ThumbSlot>
                <ThumbSlot $ml={4}><StyleThumb head="#000" band="#a6a6a6" line="#fff" mono /></ThumbSlot>
                <GalleryMore><MoreIcon /></GalleryMore>
              </Gallery>
            </GroupBody>
            <GroupLabel>Table Styles</GroupLabel>
          </Group>
          <RibbonEnd><ChevronDown size={15} strokeWidth={1.200} /></RibbonEnd>
        </Ribbon>
        <FormulaBar>
          <NameBox>A1<ChevronDown size={14} strokeWidth={1.200} color="#444" /></NameBox>
          <Dots><i /><i /><i /></Dots>
          <FxBox>
            <X size={17} strokeWidth={1.100} />
            <Check size={17} strokeWidth={1.100} />
            <Fx>fx</Fx>
            <ChevronDown size={13} strokeWidth={1.100} color="#777" />
          </FxBox>
          <FormulaInput><ChevronDown size={14} strokeWidth={1.200} style={{ transform: "rotate(180deg)" }} /></FormulaInput>
        </FormulaBar>
        <Workspace>
          <SheetColumn>
            <SheetMain>
              <Sheet>
                <Corner />
                {colW.map((c, i) => <ColHead key={i}>{c}</ColHead>)}
                <RowHead $sel>1</RowHead>
                <HeaderCell><HeaderText>ProjectId</HeaderText><FilterBtn /></HeaderCell>
                <HeaderCell><HeaderText>Name</HeaderText><FilterBtn /></HeaderCell>
                <HeaderCell><HeaderText>AdditionalProjectContact</HeaderText><FilterBtn /></HeaderCell>
                <HeaderCell><HeaderText>AmountActualCosts</HeaderText><FilterBtn /></HeaderCell>
                <HeaderCell><HeaderText>Amo</HeaderText></HeaderCell>
                {rows.map((r, i) => {
                  const band = i % 2 === 0;
                  return (
                    <React.Fragment key={r[0]}>
                      <RowHead>{i + 2}</RowHead>
                      <Cell $band={band}>{r[0]}</Cell>
                      <NameCell $band={band}>{r[1]}</NameCell>
                      <Cell $band={band} />
                      <Cell $band={band} $num>{r[2]}</Cell>
                      <Cell $band={band} $noLine />
                    </React.Fragment>
                  );
                })}
              </Sheet>
              <VScroll>
                <TriUp />
                <VThumb />
                <VSpacer />
                <TriDown />
              </VScroll>
            </SheetMain>
            <SheetTabs>
              <NavArrows>
                <ChevronLeft size={16} strokeWidth={1.200} />
                <ChevronRight size={16} strokeWidth={1.200} />
              </NavArrows>
              <ActiveTab>Query1</ActiveTab>
              <PlainTab>Sheet1</PlainTab>
              <AddTab><Plus size={16} strokeWidth={1} /></AddTab>
              <TabDots><i /><i /><i /></TabDots>
              <HScroll>
                <TriLeft />
                <HThumb />
                <TriRight />
              </HScroll>
            </SheetTabs>
          </SheetColumn>
          <Panel>
            <PanelHead>
              <PanelTitle>Queries &amp; Connections</PanelTitle>
              <ChevronDown size={19} strokeWidth={1} color="#333" />
              <X size={16} strokeWidth={1} color="#333" style={{ marginLeft: 15 }} />
            </PanelHead>
            <PanelCard>
              <PanelTabs>
                <PanelTab $active>Queries</PanelTab>
                <PanelTabSep />
                <PanelTab>Connections</PanelTab>
              </PanelTabs>
              <QueryCount>1 query</QueryCount>
              <QueryItem>
                <TableMini />
                <QueryBody>
                  <QueryName>Query1</QueryName>
                  <QueryInfo>68 rows loaded.</QueryInfo>
                </QueryBody>
                <QueryFile />
              </QueryItem>
            </PanelCard>
          </Panel>
        </Workspace>
        <Status>
          <At $ml={11}>Ready</At>
          <At $ml={19}><MacroIcon /></At>
          <At $ml={18}><AccessIcon /></At>
          <At $ml={3}>Accessibility: Good to go</At>
          <At $ml={703}><DisplayIcon /></At>
          <At $ml={2}>Display Settings</At>
          <At $ml={19}><ViewBtn $active><NormalView /></ViewBtn></At>
          <ViewBtn><PageView /></ViewBtn>
          <ViewBtn><BreakView /></ViewBtn>
          <At $ml={3}><Minus size={10} strokeWidth={1.200} /></At>
          <Slider />
          <At $ml={0}><Plus size={10} strokeWidth={1.200} /></At>
          <At $ml={13}>100 %</At>
        </Status>
      </Frame>
    </Page>
  );
}
